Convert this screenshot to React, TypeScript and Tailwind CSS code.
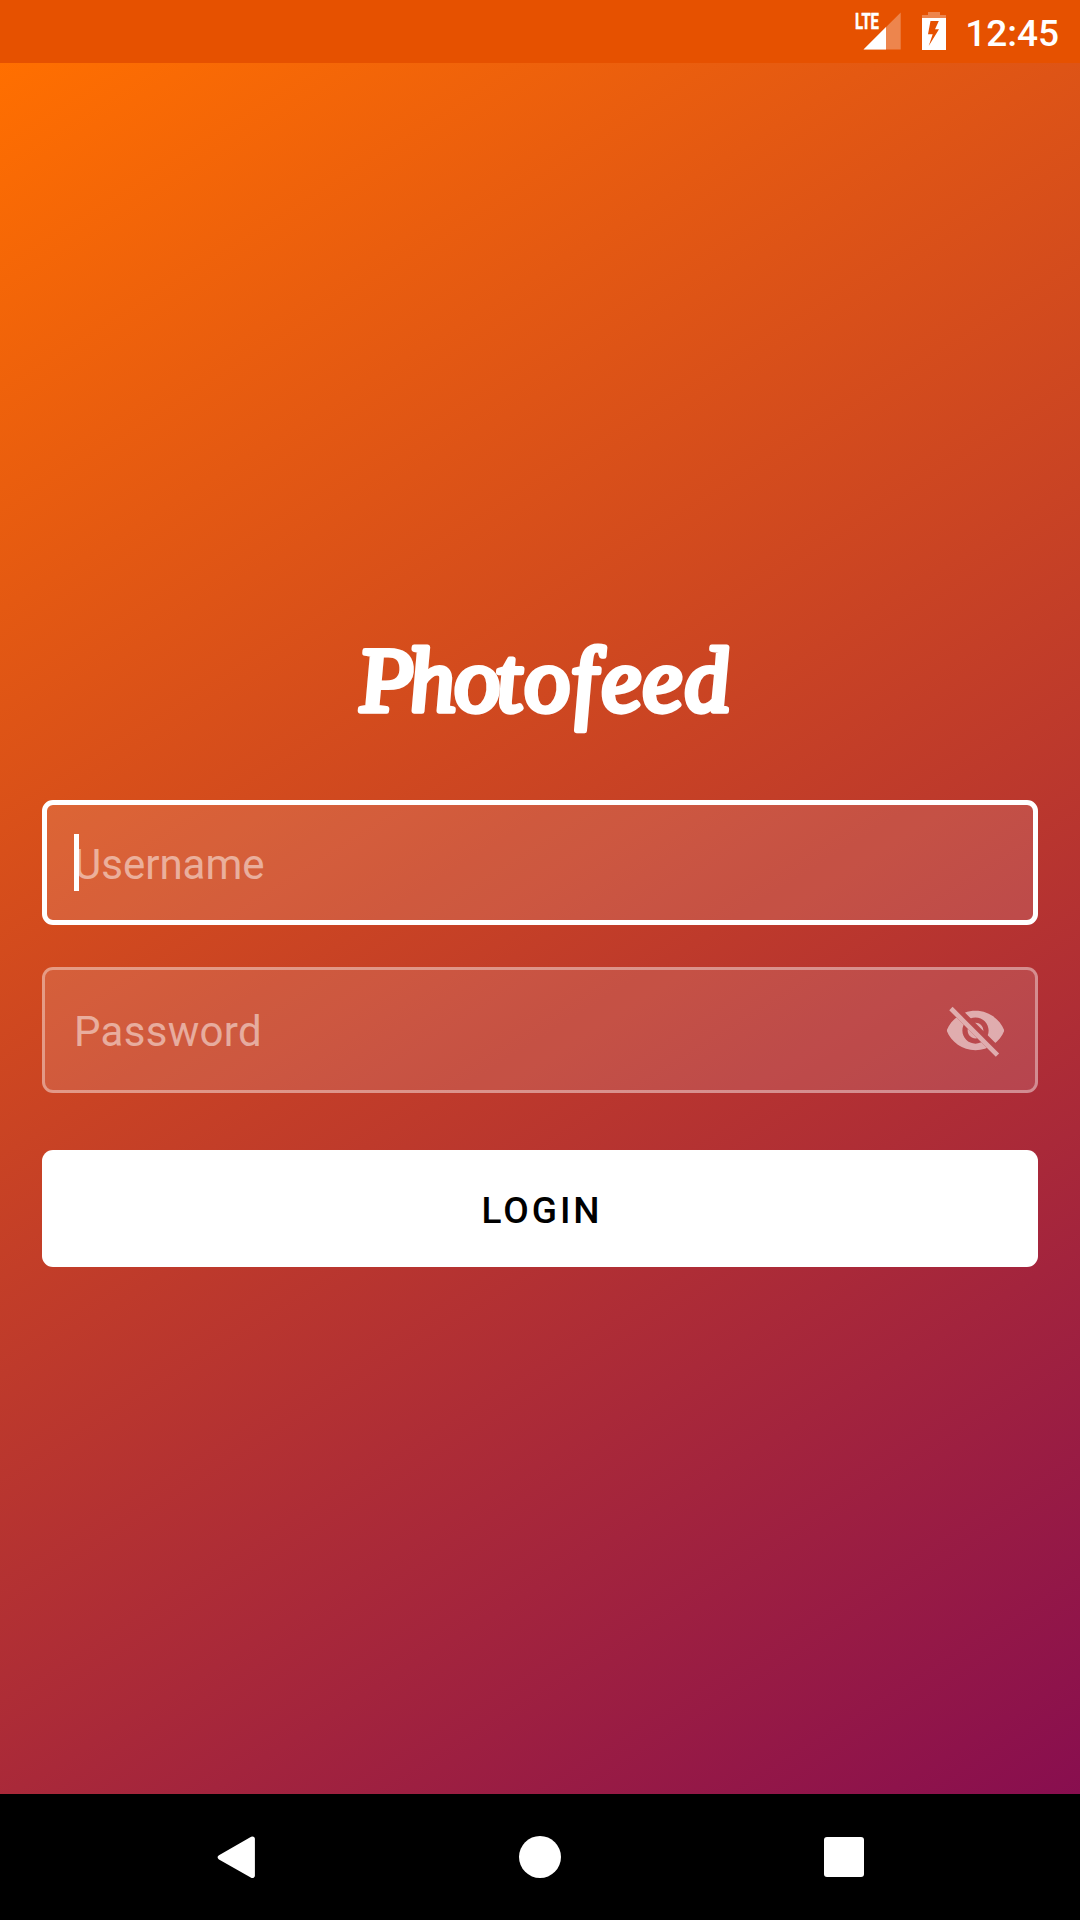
function StatusBar() {
  return (
    <header className="flex h-[63px] items-center justify-end bg-[#e65100] pr-[21px] text-white">
      <svg className="h-[63px] w-[110px]" viewBox="850 0 110 63">
        <path d="M863.5 49.5L900.7 12.5V49.5Z" fill="#fff" fillOpacity=".3" />
        <path d="M863.5 49.5L886 27.1V49.5Z" fill="#fff" />
        <text x="855" y="29" textLength="24" lengthAdjust="spacingAndGlyphs" fill="#fff" stroke="#fff" strokeWidth=".5" className="font-[Roboto] text-[22px] font-bold">
          LTE
        </text>
        <path d="M922 18V15H928V12H940V15H946V18Z" fill="#fff" fillOpacity=".3" />
        <path fillRule="evenodd" d="M922 18H946V50H922ZM930.5 21L928 34.2H932.7L928.7 46L939 29.3H935L938.8 21Z" fill="#fff" />
      </svg>
      <time className="ml-[5px] pt-[3px] font-[Roboto] text-[37px] leading-[43px] font-medium">12:45</time>
    </header>
  );
}

function HiddenEyeIcon() {
  return (
    <svg className="size-[63px] opacity-55" viewBox="0 0 24 24">
      <defs>
        <clipPath id="eye">
          <path d="M2 4.27L19.73 22L22.27 19.46L4.54 1.73V1H23V23H1V4.27Z" />
        </clipPath>
      </defs>
      <path
        clipPath="url(#eye)"
        fill="#fff"
        fillRule="evenodd"
        d="M12 4.5C7 4.5 2.73 7.61 1 12c1.73 4.39 6 7.5 11 7.5s9.27-3.11 11-7.5c-1.73-4.39-6-7.5-11-7.5zM12 17c-2.76 0-5-2.24-5-5s2.24-5 5-5 5 2.24 5 5-2.24 5-5 5zM12 9c-1.66 0-3 1.34-3 3s1.34 3 3 3 3-1.34 3-3-1.34-3-3-3z"
      />
      <path d="M2.635 3.635L20.365 21.365" stroke="#fff" strokeWidth="1.8" />
    </svg>
  );
}

function Wordmark() {
  return (
    <svg className="h-[172px] w-full" viewBox="42 628 996 172" role="img" aria-label="Photofeed">
      <g transform="translate(0 711) skewX(5)">
        <text
          x="361 411 456 498 526 574 603 644 686"
          y="0"
          fill="#fff"
          stroke="#fff"
          strokeWidth="5.5"
          strokeLinejoin="round"
          className="font-['Liberation_Serif'] text-[92px] italic"
        >
          Photofeed
        </text>
      </g>
    </svg>
  );
}

function NavigationBar() {
  return (
    <nav className="flex h-[126px] items-center justify-between bg-black px-[215px]">
      <svg className="size-[42px]" viewBox="0 0 42 42">
        <path d="M37.4 3L5.2 21.3L37.4 39.5Z" fill="#fff" stroke="#fff" strokeWidth="5" strokeLinejoin="round" />
      </svg>
      <div className="-ml-[2px] size-[42px] rounded-full bg-white" />
      <div className="mr-[1px] size-[40px] rounded-[3px] bg-white" />
    </nav>
  );
}

export default function App() {
  return (
    <div className="flex h-[1920px] w-[1080px] flex-col overflow-hidden font-[Roboto]">
      <StatusBar />
      <main className="flex flex-1 flex-col bg-[linear-gradient(148.04deg,#ff6f00,#880e4f)] px-[42px] pt-[565px]">
        <h1>
          <Wordmark />
        </h1>
        <div className="flex h-[125px] items-center rounded-[11px] border-5 border-white bg-white/12 pl-[27px]">
          <span className="h-[57px] w-[5px] bg-white" />
          <span className="-ml-[5px] pt-[4px] text-[42px] leading-[50px] text-white/50">Username</span>
        </div>
        <div className="mt-[42px] flex h-[126px] items-center justify-between rounded-[11px] border-3 border-white/38 bg-white/12 pr-[28px] pl-[29px]">
          <span className="pt-[4px] text-[42px] leading-[50px] tracking-[0.3px] text-white/50">Password</span>
          <HiddenEyeIcon />
        </div>
        <button className="mt-[57px] h-[117px] rounded-[11px] bg-white pt-[4px] pl-[4px] text-[37px] font-medium tracking-[3px] text-black">
          LOGIN
        </button>
      </main>
      <NavigationBar />
    </div>
  );
}
